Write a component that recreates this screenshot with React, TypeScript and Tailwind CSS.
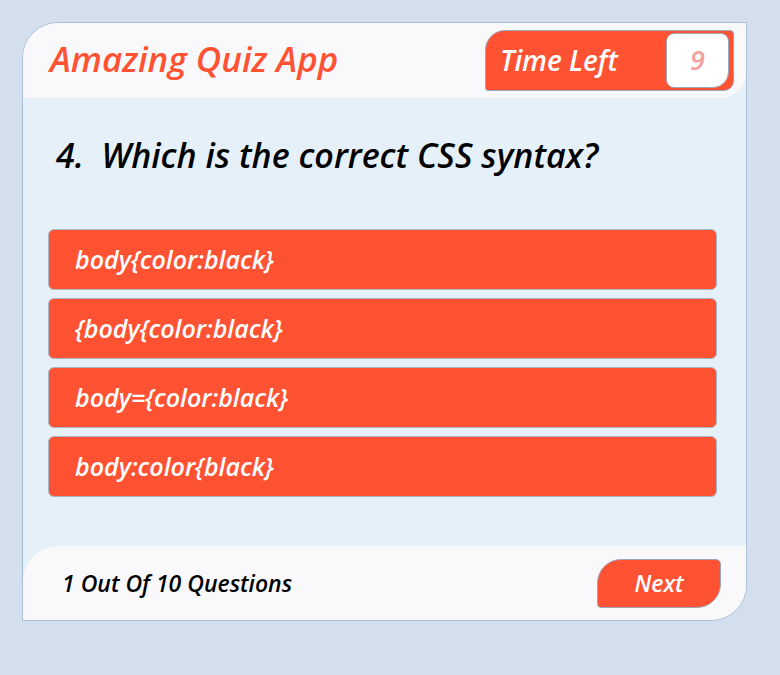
const options = [
  'body{color:black}',
  '{body{color:black}',
  'body={color:black}',
  'body:color{black}',
];

export default function App() {
  return (
    <div
      className="min-h-[675px] bg-[#d3dfec] pt-[22px] pl-[22px]"
      style={{ fontFamily: '"Open Sans", "Noto Sans", sans-serif' }}
    >
      <div className="w-[725px] h-[599px] flex flex-col bg-[#e6f0f9] border border-[#a9c0d6] rounded-tl-[36px] rounded-br-[36px] overflow-hidden italic">
        {/* header */}
        <div className="h-[75px] shrink-0 flex items-center justify-between bg-[#f9f9fc] rounded-br-[26px] pl-[27px] pr-[12px]">
          <h1 className="text-[35px] font-semibold text-[#ff5233] -mt-[2px]">Amazing Quiz App</h1>
          <div className="w-[249px] h-[61px] -mt-[1px] flex items-center justify-between bg-[#ff5233] border border-[#9aa7b8] rounded-tl-[20px] rounded-tr-[4px] rounded-bl-[3px] rounded-br-[10px] pl-[14px] pr-[4px]">
            <span className="text-[28px] font-semibold text-white">Time Left</span>
            <span className="w-[63px] h-[55px] flex items-center justify-center bg-white border border-[#9aa7b8] rounded-[8px] rounded-br-[16px] text-[27px] font-semibold text-[#f4a0a0]">
              9
            </span>
          </div>
        </div>

        {/* question */}
        <div className="flex-1 pl-[25px] pr-[29px]">
          <h2 className="mt-[37px] pl-[8px] text-[34px] leading-[40px] font-semibold text-black">
            4.&nbsp; Which is the correct CSS syntax?
          </h2>
          <div className="mt-[54px] flex flex-col gap-[8px]">
            {options.map((o) => (
              <button
                key={o}
                className="h-[61px] flex items-center text-left bg-[#ff5233] border border-[#a8b6c8] rounded-[6px] pl-[26px] text-[25px] font-semibold text-white"
              >
                {o}
              </button>
            ))}
          </div>
        </div>

        {/* footer */}
        <div className="h-[74px] shrink-0 flex items-center justify-between bg-[#f9f9fc] rounded-tl-[36px] pl-[39px] pr-[25px]">
          <span className="text-[23px] font-semibold text-black">1 Out Of 10 Questions</span>
          <button className="w-[124px] h-[49px] flex items-center justify-center bg-[#ff5233] border border-[#9aa7b8] rounded-tl-[24px] rounded-br-[24px] rounded-tr-[5px] rounded-bl-[4px] text-[23px] font-semibold text-white">
            Next
          </button>
        </div>
      </div>
    </div>
  );
}
